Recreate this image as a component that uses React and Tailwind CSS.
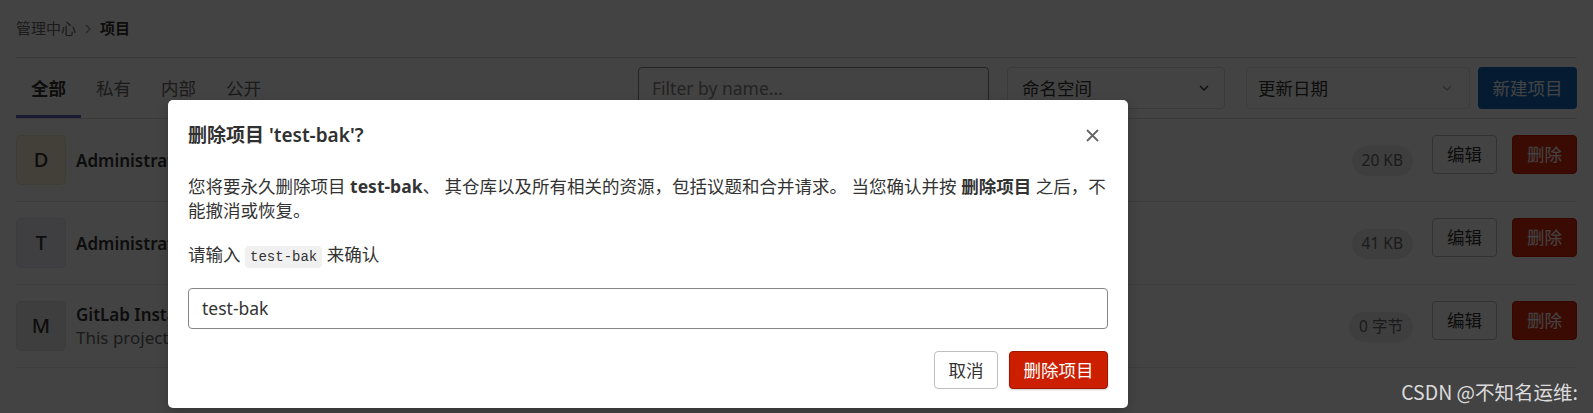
import React from 'react';

const rows = [
    { letter: 'D', bg: 'bg-[#fdf1dd]', name: 'Administrator / demo', size: '20 KB' },
    { letter: 'T', bg: 'bg-[#eef0fb]', name: 'Administrator / test-bak', size: '41 KB' },
    {
        letter: 'M',
        bg: 'bg-[#ececef]',
        name: 'GitLab Instance / Monitoring',
        desc: 'This project is automatically generated to help monitor this GitLab instance.',
        size: '0 字节',
    },
];

const Chevron = ({ className }) => (
    <svg width="12" height="8" viewBox="0 0 12 8" className={className}>
        <path d="M2 2l4 4 4-4" fill="none" stroke="currentColor" strokeWidth="1.4" />
    </svg>
);

const ProjectRow = ({ row }) => (
    <div className="flex h-[83px] items-center border-b border-[#e5e5e5]">
        <div className={`flex h-[50px] w-[50px] items-center justify-center rounded-[5px] border border-black/5 text-[20px] font-medium text-[#333] ${row.bg}`}>
            {row.letter}
        </div>
        <div className="ml-[10px] flex-1">
            <div className="text-[17px] font-semibold leading-[23px] text-[#333]">{row.name}</div>
            {row.desc && (
                <div className="text-[17px] leading-[23px] text-[#666]">{row.desc}</div>
            )}
        </div>
        <div className="flex items-center">
            <span className="mt-[2px] flex h-[30px] items-center rounded-full bg-[#ececef] px-[10px] text-[15.5px] text-[#666]">
                {row.size}
            </span>
            <div className="mb-[12px] ml-[19px] flex gap-[15px]">
                <button className="flex h-[39px] w-[65px] items-center justify-center rounded-[4px] border border-[#bfbfbf] bg-white text-[17.5px] text-[#333]">
                    编辑
                </button>
                <button className="flex h-[39px] w-[65px] items-center justify-center rounded-[4px] border border-[#c91c00] bg-[#dd2b0e] text-[17.5px] text-white">
                    删除
                </button>
            </div>
        </div>
    </div>
);

const App = () => {
    return (
        <div className="relative h-[413px] w-full overflow-hidden bg-white font-['Noto_Sans','Noto_Sans_CJK_SC',sans-serif]">
            {/* page under the backdrop */}
            <div className="px-4">
                <div className="flex h-[58px] items-center border-b border-[#dbdbdb] text-[15px]">
                    <span className="text-[#666]">管理中心</span>
                    <Chevron className="mx-[6px] -rotate-90 text-[#999]" />
                    <span className="font-bold text-[#333]">项目</span>
                </div>
                <div className="flex h-[61px] items-center justify-between border-b border-[#dbdbdb]">
                    <div className="flex h-full">
                        {['全部', '私有', '内部', '公开'].map((tab, i) => (
                            <div
                                key={tab}
                                className={`flex h-full items-center px-[15px] text-[17.5px] ${
                                    i === 0
                                        ? 'font-bold text-[#333] shadow-[inset_0_-3px_0_#6666c4]'
                                        : 'text-[#666]'
                                }`}
                            >
                                {tab}
                            </div>
                        ))}
                    </div>
                    <div className="flex items-center">
                        <div className="flex h-[42px] w-[351px] items-center rounded-[4px] border border-[#868686] px-[13px] text-[17.5px] text-[#868686]">
                            Filter by name...
                        </div>
                        <div className="ml-[18px] flex h-[42px] w-[218px] items-center justify-between rounded-[4px] border border-[#dbdbdb] pl-[14px] pr-[14px] text-[17.5px] text-[#333]">
                            命名空间
                            <Chevron className="text-[#333]" />
                        </div>
                        <div className="ml-[21px] flex h-[42px] w-[224px] items-center justify-between rounded-[4px] border border-[#e5e5e5] pl-[11px] pr-[16px] text-[17.5px] text-[#333]">
                            更新日期
                            <Chevron className="text-[#aaa]" />
                        </div>
                        <button className="ml-[8px] flex h-[42px] w-[99px] items-center justify-center rounded-[4px] bg-[#1068bf] text-[17.5px] text-white">
                            新建项目
                        </button>
                    </div>
                </div>
                {rows.map((row) => (
                    <ProjectRow key={row.letter} row={row} />
                ))}
            </div>

            {/* backdrop + modal */}
            <div className="absolute inset-0 bg-black/[0.737] pl-[168px] pt-[100px]">
                <div className="w-[960px] rounded-[5px] bg-white px-5 pb-[19px] pt-5 text-[#333] shadow-[0_4px_12px_rgba(0,0,0,0.2)]">
                    <div className="flex h-[30px] items-center justify-between">
                        <h2 className="text-[19px] font-semibold leading-[30px] text-[#303030]">
                            <span className="font-bold">删除项目</span> 'test-bak'?
                        </h2>
                        <svg width="13" height="13" viewBox="0 0 13 13" className="mr-[9px]">
                            <path d="M1 1l11 11M12 1L1 12" stroke="#666" strokeWidth="1.8" />
                        </svg>
                    </div>
                    <p className="mt-[24px] h-[48px] text-[17.5px] leading-[24px]">
                        您将要永久删除项目 <strong>test-bak</strong>、 其仓库以及所有相关的资源，包括议题和合并请求。 当您确认并按 <strong>删除项目</strong> 之后，不能撤消或恢复。
                    </p>
                    <p className="mt-[20px] h-[24px] text-[17.5px] leading-[24px]">
                        请输入{' '}
                        <code className="rounded-[4px] bg-[#f0f0f0] px-[5px] py-[3px] font-['Liberation_Mono',monospace] text-[14px] leading-none">
                            test-bak
                        </code>{' '}
                        来确认
                    </p>
                    <div className="mt-[22px] flex h-[41px] items-center rounded-[4px] border border-[#868686] px-[13px] text-[17.5px] text-[#333]">
                        test-bak
                    </div>
                    <div className="mt-[22px] flex justify-end gap-[11px]">
                        <button className="flex h-[38px] w-[64px] items-center justify-center rounded-[4px] border border-[#bfbfbf] bg-white text-[17.5px] text-[#333]">
                            取消
                        </button>
                        <button className="flex h-[38px] w-[99px] items-center justify-center rounded-[4px] border border-[#9e1500] bg-[#cb1f00] text-[17.5px] text-white shadow-[0_1px_2px_rgba(0,0,0,0.2)]">
                            删除项目
                        </button>
                    </div>
                </div>
            </div>

            <div className="absolute bottom-[7px] right-[15px] font-['Noto_Sans_CJK_SC',sans-serif] text-[19.5px] text-[#dcdcdc]">
                CSDN @不知名运维:
            </div>
        </div>
    );
};

export default App;
